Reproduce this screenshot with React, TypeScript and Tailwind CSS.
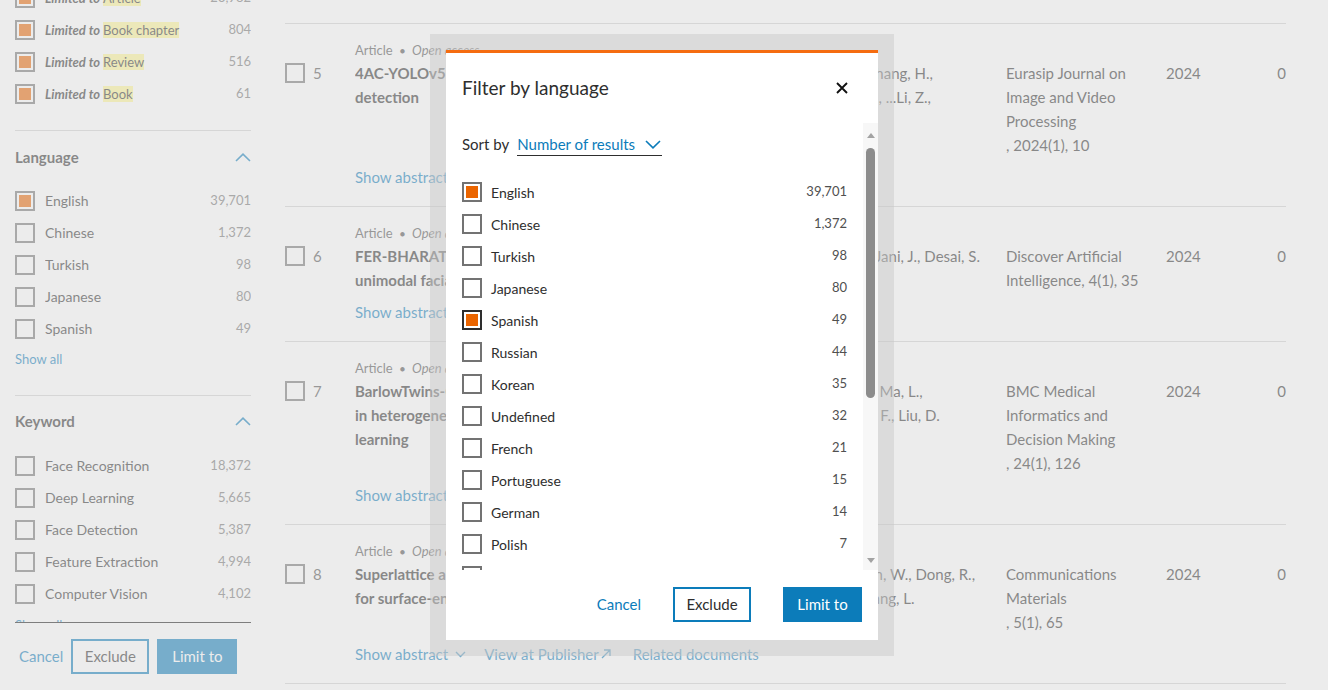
import React from "react";

const BLUE = "#0c7cba";

function Box({ checked = false, dark = false }: { checked?: boolean; dark?: boolean }) {
  return (
    <span
      className={`flex h-5 w-5 shrink-0 border-2 bg-white p-[2px] ${dark ? "border-[#2e2e2e]" : "border-[#737373]"}`}
    >
      {checked && <span className="flex-1 bg-[#eb6500]" />}
    </span>
  );
}

function ChevronUp() {
  return (
    <svg width="16" height="9" viewBox="0 0 16 9" fill="none">
      <path d="M1 8 L8 1.2 L15 8" stroke={BLUE} strokeWidth="1.6" />
    </svg>
  );
}

function SideRow({ label, count, checked = false, limited = false }: { label: string; count: string; checked?: boolean; limited?: boolean }) {
  return (
    <div className="flex h-8 items-center">
      <Box checked={checked} />
      <div className={`ml-[10px] flex-1 truncate leading-5 text-[#2e2e2e] ${limited ? "text-[13px]" : "text-[14px]"}`}>
        {limited ? (
          <>
            <span className="font-bold italic">Limited to </span>
            <span className="bg-[#fff694]">{label}</span>
          </>
        ) : (
          label
        )}
      </div>
      <div className="text-[13px] text-[#737373]">{count}</div>
    </div>
  );
}

function Sidebar() {
  return (
    <aside className="flex h-[690px] w-[285px] shrink-0 flex-col pl-[15px] pr-[34px]">
      <div className="flex-1 overflow-hidden">
        <div className="-mt-[18px]">
          <SideRow label="Article" count="23,982" checked limited />
          <SideRow label="Book chapter" count="804" checked limited />
          <SideRow label="Review" count="516" checked limited />
          <SideRow label="Book" count="61" checked limited />
        </div>
        <div className="mt-[20px] border-t border-[#d2d2d2] pt-[14px]">
          <div className="flex h-6 items-center justify-between">
            <span className="text-[15px] font-bold text-[#2e2e2e]">Language</span>
            <ChevronUp />
          </div>
          <div className="mt-[16px]">
            <SideRow label="English" count="39,701" checked />
            <SideRow label="Chinese" count="1,372" />
            <SideRow label="Turkish" count="98" />
            <SideRow label="Japanese" count="80" />
            <SideRow label="Spanish" count="49" />
          </div>
          <div className="mt-[4px] h-5 text-[13px] leading-5" style={{ color: BLUE }}>
            Show all
          </div>
        </div>
        <div className="mt-[26px] border-t border-[#d2d2d2] pt-[13px]">
          <div className="flex h-6 items-center justify-between">
            <span className="text-[15px] font-bold text-[#2e2e2e]">Keyword</span>
            <ChevronUp />
          </div>
          <div className="mt-[17px]">
            <SideRow label="Face Recognition" count="18,372" />
            <SideRow label="Deep Learning" count="5,665" />
            <SideRow label="Face Detection" count="5,387" />
            <SideRow label="Feature Extraction" count="4,994" />
            <SideRow label="Computer Vision" count="4,102" />
          </div>
          <div className="mt-[5px] h-5 text-[13px] leading-5" style={{ color: BLUE }}>
            Show all
          </div>
        </div>
      </div>
      <div className="h-[68px] shrink-0 border-t border-[#1a1a1a] pt-[16px]">
        <div className="flex items-center gap-2">
          <span className="ml-1 text-[15px] text-[#0c7cba]">Cancel</span>
          <span className="flex h-[35px] w-[78px] items-center justify-center border-2 border-[#0c7cba] text-[15px] text-[#2e2e2e]">
            Exclude
          </span>
          <span className="flex h-[35px] w-[80px] items-center justify-center bg-[#0c7cba] text-[15px] text-white">
            Limit to
          </span>
        </div>
      </div>
    </aside>
  );
}

type Row = {
  n: number;
  title: string[];
  authors: string[];
  source: string[];
};

const rows: Row[] = [
  {
    n: 5,
    title: ["4AC-YOLOv5: an improved algorithm for small target face", "detection"],
    authors: ["Wang, X., Chen, Y., Zhang, H.,", "Zhou, X., Huang, Y.Q., ...Li, Z.,"],
    source: ["Eurasip Journal on", "Image and Video", "Processing", ", 2024(1), 10"],
  },
  {
    n: 6,
    title: ["FER-BHARAT: a lightweight deep learning network for efficient", "unimodal facial emotion recognition in Indian context"],
    authors: ["Sharma, P., Patel, K., Jani, J., Desai, S."],
    source: ["Discover Artificial", "Intelligence, 4(1), 35"],
  },
  {
    n: 7,
    title: ["BarlowTwins-CXR: enhancing chest X-ray abnormality", "in heterogeneous data with cross-domain self-supervised", "learning"],
    authors: ["Sheng, W., Zhang, Y., Ma, L.,", "Huang, X.Y., ...Zhang, F., Liu, D."],
    source: ["BMC Medical", "Informatics and", "Decision Making", ", 24(1), 126"],
  },
  {
    n: 8,
    title: ["Superlattice arrays of plasmonic nanoparticles", "for surface-enhanced Raman scattering"],
    authors: ["Zhao, Y., Liu, Q., Chen, W., Dong, R.,", "Xu, H., Wu, J.Y., ...Zhang, L."],
    source: ["Communications", "Materials", ", 5(1), 65"],
  },
];

function ResultRow({ r }: { r: Row }) {
  return (
    <div className="border-b border-[#d2d2d2] pb-[17px] pt-[17px] text-[#2e2e2e]">
      <div className="ml-[70px] flex h-5 items-center text-[13px] text-[#505050]">
        <span>Article</span>
        <span className="mx-[7px] text-[9px]">●</span>
        <span className="italic">Open access</span>
      </div>
      <div className="flex items-start text-[15px] leading-6">
        <div className="w-[28px] shrink-0 pt-[2px]">
          <Box />
        </div>
        <div className="w-[42px] shrink-0 text-[#505050]">{r.n}</div>
        <div className="w-[385px] shrink-0 overflow-hidden font-bold">
          {r.title.map((t, i) => (
            <div key={i} className="whitespace-nowrap">
              {t}
            </div>
          ))}
        </div>
        <div className="w-[266px] shrink-0 overflow-hidden">
          {r.authors.map((t, i) => (
            <div key={i} className="whitespace-nowrap">
              {t}
            </div>
          ))}
        </div>
        <div className="w-[160px] shrink-0">
          {r.source.map((t, i) => (
            <div key={i} className="whitespace-nowrap">
              {t}
            </div>
          ))}
        </div>
        <div className="w-[64px] shrink-0">2024</div>
        <div className="flex-1 text-right">0</div>
      </div>
      <div className="ml-[70px] mt-[8px] flex h-6 items-center text-[15px]" style={{ color: BLUE }}>
        <span>Show abstract</span>
        <svg className="ml-[7px]" width="11" height="7" viewBox="0 0 11 7" fill="none">
          <path d="M1 1 L5.5 5.5 L10 1" stroke={BLUE} strokeWidth="1.4" />
        </svg>
        <span className="ml-[18px]">View at Publisher</span>
        <svg className="ml-[2px]" width="10" height="10" viewBox="0 0 10 10" fill="none">
          <path d="M1 9 L9 1 M3 1 H9 V7" stroke={BLUE} strokeWidth="1.3" />
        </svg>
        <span className="ml-[22px]">Related documents</span>
      </div>
    </div>
  );
}

const langs: { l: string; c: string; checked?: boolean; dark?: boolean }[] = [
  { l: "English", c: "39,701", checked: true },
  { l: "Chinese", c: "1,372" },
  { l: "Turkish", c: "98" },
  { l: "Japanese", c: "80" },
  { l: "Spanish", c: "49", checked: true, dark: true },
  { l: "Russian", c: "44" },
  { l: "Korean", c: "35" },
  { l: "Undefined", c: "32" },
  { l: "French", c: "21" },
  { l: "Portuguese", c: "15" },
  { l: "German", c: "14" },
  { l: "Polish", c: "7" },
  { l: "Italian", c: "5" },
];

function Modal() {
  return (
    <div className="fixed inset-0 z-20 flex items-center justify-center pr-[4px]">
      <div className="h-[622px] w-[464px] bg-[rgba(200,200,200,0.45)] p-4">
        <div className="flex h-full flex-col border-t-[3px] border-[#f56c10] bg-white text-[#2e2e2e]">
          <div className="flex h-[70px] shrink-0 items-center justify-between pl-4 pr-[30px]">
            <span className="text-[19px]">Filter by language</span>
            <svg width="12" height="12" viewBox="0 0 12 12" fill="none">
              <path d="M1 1 L11 11 M11 1 L1 11" stroke="#111" strokeWidth="1.9" />
            </svg>
          </div>
          <div className="flex h-[447px] shrink-0">
            <div className="flex-1 overflow-hidden pl-4 pr-4 pt-[9px]">
              <div className="flex h-6 items-center text-[15px]">
                <span>Sort by</span>
                <span className="ml-[8px] flex h-6 items-center border-b-[1.5px] border-[#2e2e2e] pt-[1px] text-[#0c7cba]">
                  Number of results
                  <svg className="ml-[10px] mr-[1px]" width="16" height="9" viewBox="0 0 16 9" fill="none">
                    <path d="M1 1 L8 7.8 L15 1" stroke={BLUE} strokeWidth="1.6" />
                  </svg>
                </span>
              </div>
              <div className="mt-[20px]">
                {langs.map((x) => (
                  <div key={x.l} className="flex h-8 items-center">
                    <Box checked={x.checked} dark={x.dark} />
                    <span className="ml-[9px] flex-1 text-[14px]">{x.l}</span>
                    <span className="text-[13px] text-[#505050]">{x.c}</span>
                  </div>
                ))}
              </div>
            </div>
            <div className="flex w-[15px] shrink-0 flex-col items-center bg-[#f7f7f7] pb-[7px] pt-[10px]">
              <svg width="8" height="5" viewBox="0 0 8 5">
                <path d="M0 5 L4 0 L8 5 Z" fill="#a3a3a3" />
              </svg>
              <div className="mt-[10px] h-[250px] w-[9px] rounded-full bg-[#8c8c8c]" />
              <div className="flex-1" />
              <svg width="8" height="5" viewBox="0 0 8 5">
                <path d="M0 0 L8 0 L4 5 Z" fill="#a3a3a3" />
              </svg>
            </div>
          </div>
          <div className="flex flex-1 items-center justify-end gap-8 pb-[2px] pr-4">
            <span className="text-[15px] text-[#0c7cba]">Cancel</span>
            <span className="flex h-[35px] w-[78px] items-center justify-center border-2 border-[#0c7cba] text-[15px]">
              Exclude
            </span>
            <span className="flex h-[35px] w-[79px] items-center justify-center bg-[#0c7cba] text-[15px] text-white">
              Limit to
            </span>
          </div>
        </div>
      </div>
    </div>
  );
}

export default function App() {
  return (
    <div className="relative h-[690px] w-[1328px] overflow-hidden bg-white font-['Lato',sans-serif]">
      <div className="flex">
        <Sidebar />
        <main className="flex-1 pr-[42px]">
          <div className="h-[24px] border-b border-[#d2d2d2]" />
          {rows.map((r) => (
            <ResultRow key={r.n} r={r} />
          ))}
        </main>
      </div>
      <div className="fixed inset-0 z-10 bg-[rgba(218,218,218,0.52)]" />
      <Modal />
    </div>
  );
}
